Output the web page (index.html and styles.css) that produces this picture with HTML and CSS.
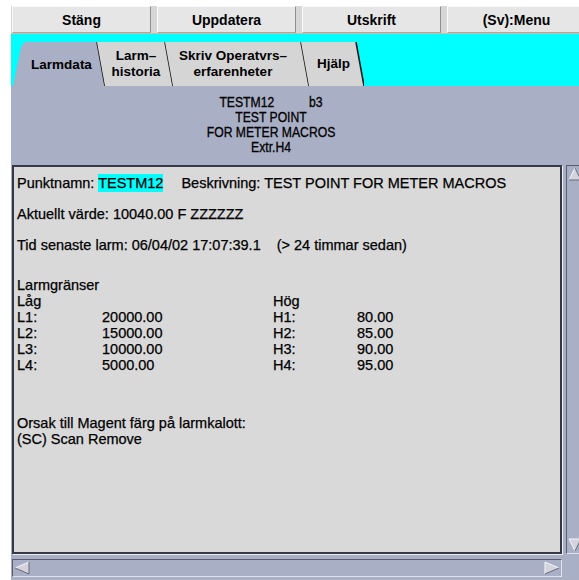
FILE: index.html
```html
<!DOCTYPE html>
<html lang="sv">
<head>
<meta charset="utf-8">
<title>Larmdata – TESTM12</title>
<link rel="stylesheet" href="styles.css">
</head>
<body>
<div class="app">
  <div class="toolbar">
    <button class="tb-btn">Stäng</button>
    <button class="tb-btn">Uppdatera</button>
    <button class="tb-btn">Utskrift</button>
    <button class="tb-btn">(Sv):Menu</button>
  </div>

  <div class="tabstrip">
    <div class="tab tab-active">
      <svg class="tab-shape" width="93" height="44" viewBox="0 0 93 44">
        <polygon class="tab-fill" points="1,44 9,5 13,0 85,0 93,44"/>
        <line class="tab-edge" x1="85" y1="0" x2="93" y2="44"/>
      </svg>
      <span class="tab-label tl-1">Larmdata</span>
    </div>
    <div class="tab">
      <svg class="tab-shape" width="76" height="44" viewBox="0 0 76 44">
        <polygon class="tab-fill" points="0,0 68,0 76,44 8,44"/>
        <line class="tab-edge" x1="68" y1="0" x2="76" y2="44"/>
      </svg>
      <span class="tab-label">Larm–<br>historia</span>
    </div>
    <div class="tab">
      <svg class="tab-shape" width="144" height="44" viewBox="0 0 144 44">
        <polygon class="tab-fill" points="0,0 136,0 144,44 8,44"/>
        <line class="tab-edge" x1="136" y1="0" x2="144" y2="44"/>
      </svg>
      <span class="tab-label tl-3">Skriv Operatvrs–<br>erfarenheter</span>
    </div>
    <div class="tab">
      <svg class="tab-shape" width="63" height="44" viewBox="0 0 63 44">
        <polygon class="tab-fill" points="0,0 55,0 63,44 8,44"/>
        <line class="tab-edge" x1="55" y1="0" x2="63" y2="44"/>
      </svg>
      <span class="tab-label">Hjälp</span>
    </div>
  </div>

  <div class="pointhead">
    <div class="ph-lines">
      <div class="ph-row"><span>TESTM12</span><span>b3</span></div>
      <div>TEST POINT</div>
      <div>FOR METER MACROS</div>
      <div>Extr.H4</div>
    </div>
  </div>

  <div class="workarea">
    <div class="detail">
      <div class="line l-name">Punktnamn: <span class="tag">TESTM12</span><span class="desc">Beskrivning: TEST POINT FOR METER MACROS</span></div>
      <div class="line l-value">Aktuellt värde: 10040.00 F ZZZZZZ</div>
      <div class="line l-time">Tid senaste larm: 06/04/02 17:07:39.1<span class="ago">(&gt; 24 timmar sedan)</span></div>
      <div class="line l-limits">Larmgränser</div>
      <div class="limits">
        <span>Låg</span><span></span><span>Hög</span><span></span>
        <span>L1:</span><span>20000.00</span><span>H1:</span><span>80.00</span>
        <span>L2:</span><span>15000.00</span><span>H2:</span><span>85.00</span>
        <span>L3:</span><span>10000.00</span><span>H3:</span><span>90.00</span>
        <span>L4:</span><span>5000.00</span><span>H4:</span><span>95.00</span>
      </div>
      <div class="line l-cause">Orsak till Magent färg på larmkalott:</div>
      <div class="line">(SC) Scan Remove</div>
    </div>

    <div class="vscroll">
      <svg class="arrow" width="14" height="14" viewBox="0 0 14 14">
        <polygon points="1,13 7,1 13,13" fill="#d2d3dc"/>
        <polyline points="1,13 7,1" stroke="#f6f6fa" fill="none"/>
        <polyline points="7,1 13,13 1,13" stroke="#6a6b7a" fill="none"/>
      </svg>
      <svg class="arrow" width="14" height="14" viewBox="0 0 14 14">
        <polygon points="1,1 13,1 7,13" fill="#d2d3dc"/>
        <polyline points="7,13 1,1 13,1" stroke="#f6f6fa" fill="none"/>
        <polyline points="13,1 7,13" stroke="#6a6b7a" fill="none"/>
      </svg>
    </div>

    <div class="hscroll">
      <svg class="arrow" width="16" height="14" viewBox="0 0 16 14">
        <polygon points="1,7 15,1 15,13" fill="#d2d3dc"/>
        <polyline points="15,1 1,7" stroke="#f6f6fa" fill="none"/>
        <polyline points="1,7 15,13 15,1" stroke="#6a6b7a" fill="none"/>
      </svg>
      <svg class="arrow" width="16" height="14" viewBox="0 0 16 14">
        <polygon points="1,1 15,7 1,13" fill="#d2d3dc"/>
        <polyline points="1,13 1,1 15,7" stroke="#f6f6fa" fill="none"/>
        <polyline points="15,7 1,13" stroke="#6a6b7a" fill="none"/>
      </svg>
    </div>
  </div>
</div>
</body>
</html>
```

FILE: styles.css
```css
* {
  box-sizing: border-box;
}

html,
body {
  margin: 0;
  background: #ffffff;
  overflow: hidden;
}

body {
  width: 579px;
  height: 580px;
  font-family: "Liberation Sans", Arial, sans-serif;
  color: #000;
}

.app {
  margin-left: 11px;
  padding-top: 6px;
  width: 568px;
}

/* top command buttons */
.toolbar {
  display: grid;
  grid-template-columns: repeat(4, 139px);
  column-gap: 6px;
  padding-left: 1px;
  height: 28px;
  background: #d6d6d6;
  border-bottom: 1px solid #c9c0a6;
}

.tb-btn {
  margin: 0;
  padding: 0;
  height: 27px;
  background: #e6e6e6;
  border: 1px solid;
  border-color: #fbfbfb #8e8e8e #a8a8a8 #fbfbfb;
  font-family: "Liberation Sans", Arial, sans-serif;
  font-weight: bold;
  font-size: 14px;
  color: #000;
}

/* notebook tabs */
.tabstrip {
  display: flex;
  align-items: flex-end;
  height: 52px;
  padding-left: 1px;
  background: #00ffff;
}

.tab {
  display: grid;
  height: 44px;
  margin-left: -8px;
}

.tab:first-child {
  margin-left: 0;
}

.tab > * {
  grid-area: 1 / 1;
}

.tab-shape {
  display: block;
}

.tab-fill {
  fill: #d5d5d5;
}

.tab-active .tab-fill {
  fill: #a9afc4;
}

.tab-edge {
  stroke: #1a1a1a;
  stroke-width: 1.6;
}

.tab-label {
  align-self: center;
  justify-self: center;
  padding-left: 2px;
  font-weight: bold;
  font-size: 13.5px;
  line-height: 16px;
  text-align: center;
}

.tl-1 {
  padding-left: 6px;
  padding-top: 1px;
}

.tl-3 {
  padding-left: 0;
  padding-right: 8px;
}

/* point heading */
.pointhead {
  background: #a9afc4;
  padding: 9px 48px 10px 0;
  font-size: 14px;
  line-height: 15px;
  text-align: center;
  -webkit-text-stroke: 0.3px #000;
}

.ph-lines {
  transform: scaleX(0.87);
}

.ph-row {
  display: flex;
  justify-content: center;
  gap: 40px;
}

/* detail pane with scrollbars */
.workarea {
  display: grid;
  grid-template-columns: 550px 15px;
  grid-template-rows: 389px 18px;
  column-gap: 4px;
  row-gap: 5px;
  padding-left: 1px;
  padding-bottom: 8px;
  background: #a9afc4;
}

.detail {
  background: #d9d9d9;
  border: 2px solid #373845;
  box-shadow: 1px 1px 0 #eeeef3;
  padding: 8px 3px;
  font-size: 14.5px;
  line-height: 16px;
  white-space: nowrap;
  -webkit-text-stroke: 0.25px #000;
}

.tag {
  background: #00ffff;
  padding: 1px 0;
}

.desc {
  margin-left: 18px;
}

.ago {
  margin-left: 16px;
}

.l-value,
.l-time {
  margin-top: 15px;
}

.l-limits {
  margin-top: 24px;
}

.limits {
  display: grid;
  grid-template-columns: 85px 171px 84px auto;
  line-height: 16px;
}

.l-cause {
  margin-top: 42px;
}

.vscroll {
  display: flex;
  flex-direction: column;
  justify-content: space-between;
  padding: 1px 0 1px 1px;
  background: #a9afc4;
  border: 1px solid;
  border-color: #5c5d6c #e2e3ea #e2e3ea #5c5d6c;
}

.hscroll {
  display: flex;
  justify-content: space-between;
  align-items: center;
  padding: 0 1px;
  background: #a9afc4;
  border: 1px solid;
  border-color: #5c5d6c #e2e3ea #e2e3ea #5c5d6c;
}

.arrow {
  display: block;
}
```
